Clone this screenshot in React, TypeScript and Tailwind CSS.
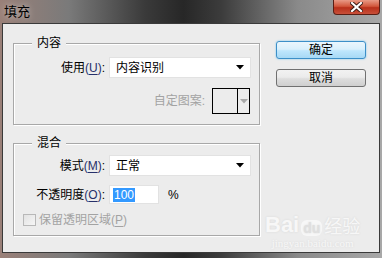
import React from 'react';

const font = "font-['Liberation_Sans','Noto_Sans_CJK_SC',sans-serif]";

// small black down arrow used by the dropdowns
const Caret: React.FC<{ color?: string }> = ({ color = '#000' }) => (
  <svg width="8" height="5" viewBox="0 0 8 5">
    <path d="M0 0 H8 L4 4.5 Z" fill={color} />
  </svg>
);

const Select: React.FC<{ value: string }> = ({ value }) => (
  <div className="w-[142px] h-[21px] bg-white border border-[#e2e2e2] flex items-center justify-between pl-[6px] pr-[6px]">
    <span className="text-[12px] leading-none text-black">{value}</span>
    <Caret />
  </div>
);

const Label: React.FC<{ text: string; hot: string }> = ({ text, hot }) => (
  <div className="w-[91px] flex justify-end text-[12px] leading-none text-black">
    <span>
      {text}
      <span className="text-[#26306a]">
        (<span className="underline underline-offset-2">{hot}</span>)
      </span>
      :
    </span>
  </div>
);

const Group: React.FC<{ title: string; className?: string; children: React.ReactNode }> = ({ title, className, children }) => (
  <div className={`relative border border-[#a8a8a8] shadow-[inset_1px_1px_0_#fff,1px_1px_0_#fff] ${className ?? ''}`}>
    <span className="absolute -top-[9px] left-[18px] px-[5px] bg-[#ececec] text-[12px] leading-[16px] text-black">{title}</span>
    {children}
  </div>
);

const App: React.FC = () => {
  return (
    <div className={`w-[382px] h-[258px] flex flex-col bg-[linear-gradient(90deg,#9a8078_0%,#7a7a7a_18%,#3a3a3a_38%,#272727_48%,#3c3c3c_58%,#8a8a8a_78%,#a8a8a8_100%)] ${font}`}>
      {/* Title bar */}
      <div className="relative h-[23px] shrink-0 flex items-center pl-[4px]">
        <span className="text-[13px] leading-none text-black [text-shadow:0_0_6px_rgba(255,255,255,0.6)]">填充</span>
        <div className="absolute right-[2px] top-0 w-[47px] h-[15px] rounded-b-[4px] border border-t-0 border-[#5a1e14] bg-[linear-gradient(180deg,#e89a86_0%,#d2573c_45%,#b8301a_55%,#c8503a_100%)] flex items-center justify-center">
          <svg width="13" height="10" viewBox="0 0 13 10">
            <path d="M2 1 L11 9 M11 1 L2 9" stroke="#3a1a14" strokeWidth="4" strokeLinecap="square" />
            <path d="M2 1 L11 9 M11 1 L2 9" stroke="#ffffff" strokeWidth="2.2" strokeLinecap="square" />
          </svg>
        </div>
      </div>

      {/* Client area */}
      <div className="relative mx-[2px] h-[230px] border border-[#3a3a3a] bg-[#ececec] flex">
        <div className="pl-[10px] pt-[19px] flex flex-col">
          <Group title="内容" className="w-[247px] h-[82px]">
            <div className="flex items-center pt-[13px]">
              <Label text="使用" hot="U" />
              <div className="ml-[4px]">
                <Select value="内容识别" />
              </div>
            </div>
            <div className="flex items-center mt-[10px]">
              <div className="w-[191px] text-right text-[12px] leading-none text-[#a3a3a3]">自定图案:</div>
              <div className="ml-[7px] w-[38px] h-[26px] border border-black bg-[#ececec] flex">
                <div className="w-[25px] border-r border-black" />
                <div className="flex-1 flex items-center justify-center">
                  <Caret color="#a8a8a8" />
                </div>
              </div>
            </div>
          </Group>

          <Group title="混合" className="w-[247px] h-[93px] mt-[18px]">
            <div className="flex items-center pt-[11px]">
              <Label text="模式" hot="M" />
              <div className="ml-[4px]">
                <Select value="正常" />
              </div>
            </div>
            <div className="flex items-center mt-[9px]">
              <Label text="不透明度" hot="O" />
              <div className="ml-[4px] w-[50px] h-[19px] bg-white border border-[#e2e2e2] flex items-center pl-[3px]">
                <span className="bg-[#3399ff] text-white text-[12px] leading-[14px] px-[1px]">100</span>
              </div>
              <span className="ml-[9px] text-[12px] leading-none text-black">%</span>
            </div>
            <div className="flex items-center mt-[10px] pl-[9px]">
              <div className="w-[13px] h-[12px] border border-[#b8b8b8] bg-[linear-gradient(135deg,#e2e2e2,#f6f6f6)]" />
              <span className="ml-[3px] text-[12px] leading-none text-[#a3a3a3]">
                保留透明区域(<span className="underline underline-offset-2">P</span>)
              </span>
            </div>
          </Group>
        </div>

        {/* Buttons */}
        <div className="ml-[16px] pt-[17px] flex flex-col gap-[10px]">
          <button className="w-[90px] h-[18px] rounded-[3px] border border-[#3c8fc8] bg-[linear-gradient(180deg,#eaf6fd_0%,#d9f0fc_45%,#bee6fd_55%,#a7d9f5_100%)] shadow-[0_0_2px_#6cc3f0] text-[12px] leading-none text-black">
            确定
          </button>
          <button className="w-[90px] h-[18px] rounded-[3px] border border-[#707070] bg-[linear-gradient(180deg,#f2f2f2_0%,#ebebeb_45%,#dddddd_55%,#cfcfcf_100%)] text-[12px] leading-none text-black">
            取消
          </button>
        </div>

        {/* Baidu watermark */}
        <div className="absolute left-[262px] top-[190px] flex flex-col items-center text-white opacity-60 [text-shadow:0_0_2px_#c8c8c8]">
          <div className="flex items-end">
            <span className="text-[22px] font-bold leading-none font-['Liberation_Sans',sans-serif]">Bai</span>
            <span className="ml-[2px] px-[2px] rounded-[6px] bg-white text-[#d8d8d8] text-[14px] font-bold leading-[16px]">du</span>
            <span className="ml-[2px] text-[18px] leading-none">经验</span>
          </div>
          <span className="mt-[2px] text-[11px] leading-none font-['Liberation_Serif',serif]">jingyan.baidu.com</span>
        </div>
      </div>
    </div>
  );
};

export default App;
